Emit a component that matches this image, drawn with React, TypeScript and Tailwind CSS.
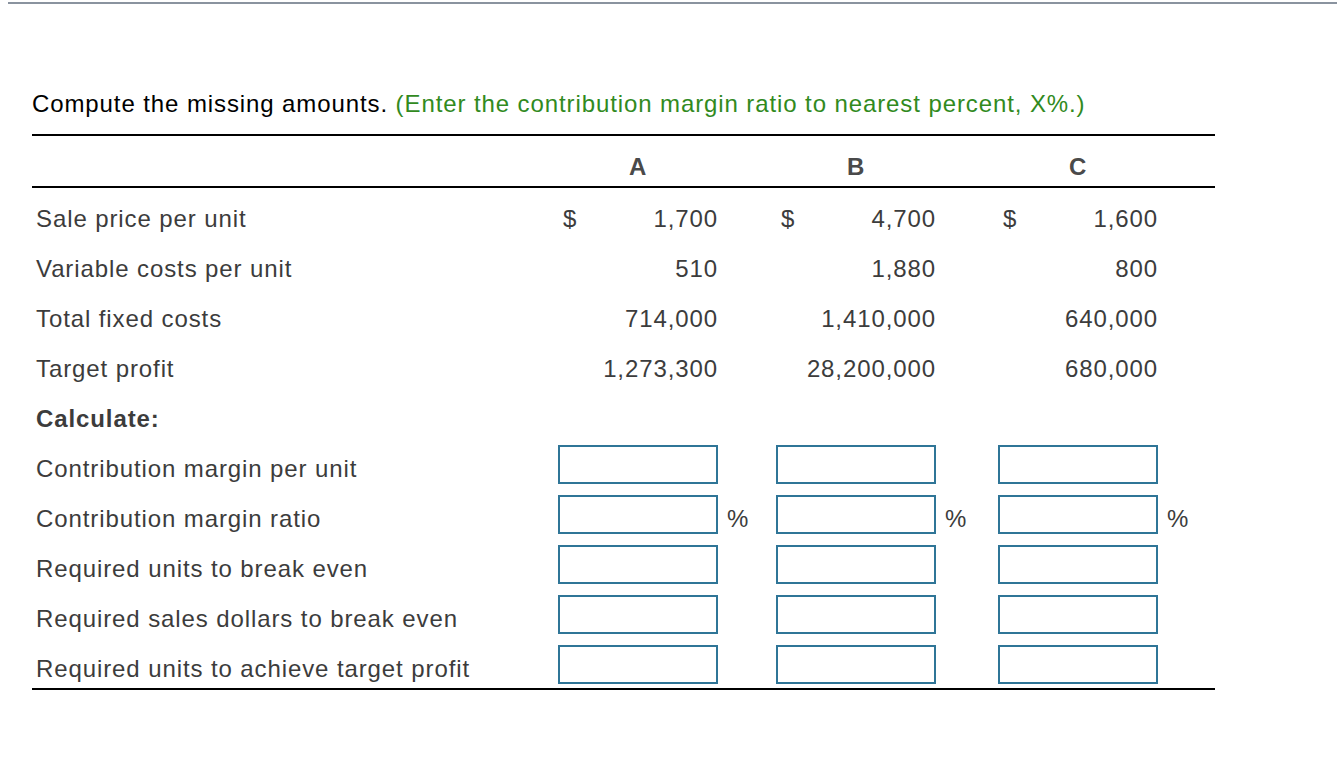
import React from 'react';

type Row = {
  label: string;
  bold?: boolean;
  values?: [string, string, string];
  dollar?: boolean;
  input?: boolean;
  pct?: boolean;
};

const rows: Row[] = [
  { label: 'Sale price per unit', values: ['1,700', '4,700', '1,600'], dollar: true },
  { label: 'Variable costs per unit', values: ['510', '1,880', '800'] },
  { label: 'Total fixed costs', values: ['714,000', '1,410,000', '640,000'] },
  { label: 'Target profit', values: ['1,273,300', '28,200,000', '680,000'] },
  { label: 'Calculate:', bold: true },
  { label: 'Contribution margin per unit', input: true },
  { label: 'Contribution margin ratio', input: true, pct: true },
  { label: 'Required units to break even', input: true },
  { label: 'Required sales dollars to break even', input: true },
  { label: 'Required units to achieve target profit', input: true },
];

const gaps = ['w-[58px]', 'w-[62px]', 'w-[57px]'];

function Cell({ row, i }: { row: Row; i: number }) {
  return (
    <>
      <div className="w-[160px] shrink-0 h-full flex">
        {row.values && (
          <div className="w-full flex justify-between pl-[5px] pr-0 pt-[18px]">
            <span>{row.dollar ? '$' : ''}</span>
            <span>{row.values[i]}</span>
          </div>
        )}
        {row.input && (
          <input
            type="text"
            className="mt-[7px] w-[160px] h-[39px] border-2 border-[#2f7597] bg-white outline-none"
          />
        )}
      </div>
      <div className={`${gaps[i]} shrink-0 pl-[9px] pt-[18px]`}>{row.pct ? '%' : ''}</div>
    </>
  );
}

export default function App() {
  return (
    <div
      className="w-[1337px] h-[777px] bg-white overflow-hidden"
      style={{ fontFamily: '"Liberation Sans", Arial, sans-serif' }}
    >
      <div className="ml-[8px] mt-[2px] h-[2px] bg-[#8a939f]" />
      <div className="pl-[32px] pt-[85px]">
        <p className="text-[24px] leading-[30px] tracking-[0.9px] text-black">
          Compute the missing amounts.{' '}
          <span className="text-[#318a1e]">(Enter the contribution margin ratio to nearest percent, X%.)</span>
        </p>
        <div className="mt-[15px] w-[1183px] border-t-2 border-b-2 border-black text-[24px] leading-[26px] tracking-[0.9px] text-[#3c3c3c]">
          <div className="flex h-[52px] border-b-2 border-black font-bold text-[24px] text-[#4a4a4a]">
            <div className="w-[526px] shrink-0" />
            {['A', 'B', 'C'].map((h, i) => (
              <React.Fragment key={h}>
                <div className="w-[160px] shrink-0 text-center pt-[18px]">{h}</div>
                <div className={`${gaps[i]} shrink-0`} />
              </React.Fragment>
            ))}
          </div>
          {rows.map((row) => (
            <div key={row.label} className="flex h-[50px]">
              <div className={`w-[526px] shrink-0 pl-[4px] pt-[18px] ${row.bold ? 'font-bold' : ''}`}>
                {row.label}
              </div>
              {!row.bold && [0, 1, 2].map((i) => <Cell key={i} row={row} i={i} />)}
            </div>
          ))}
        </div>
      </div>
    </div>
  );
}
